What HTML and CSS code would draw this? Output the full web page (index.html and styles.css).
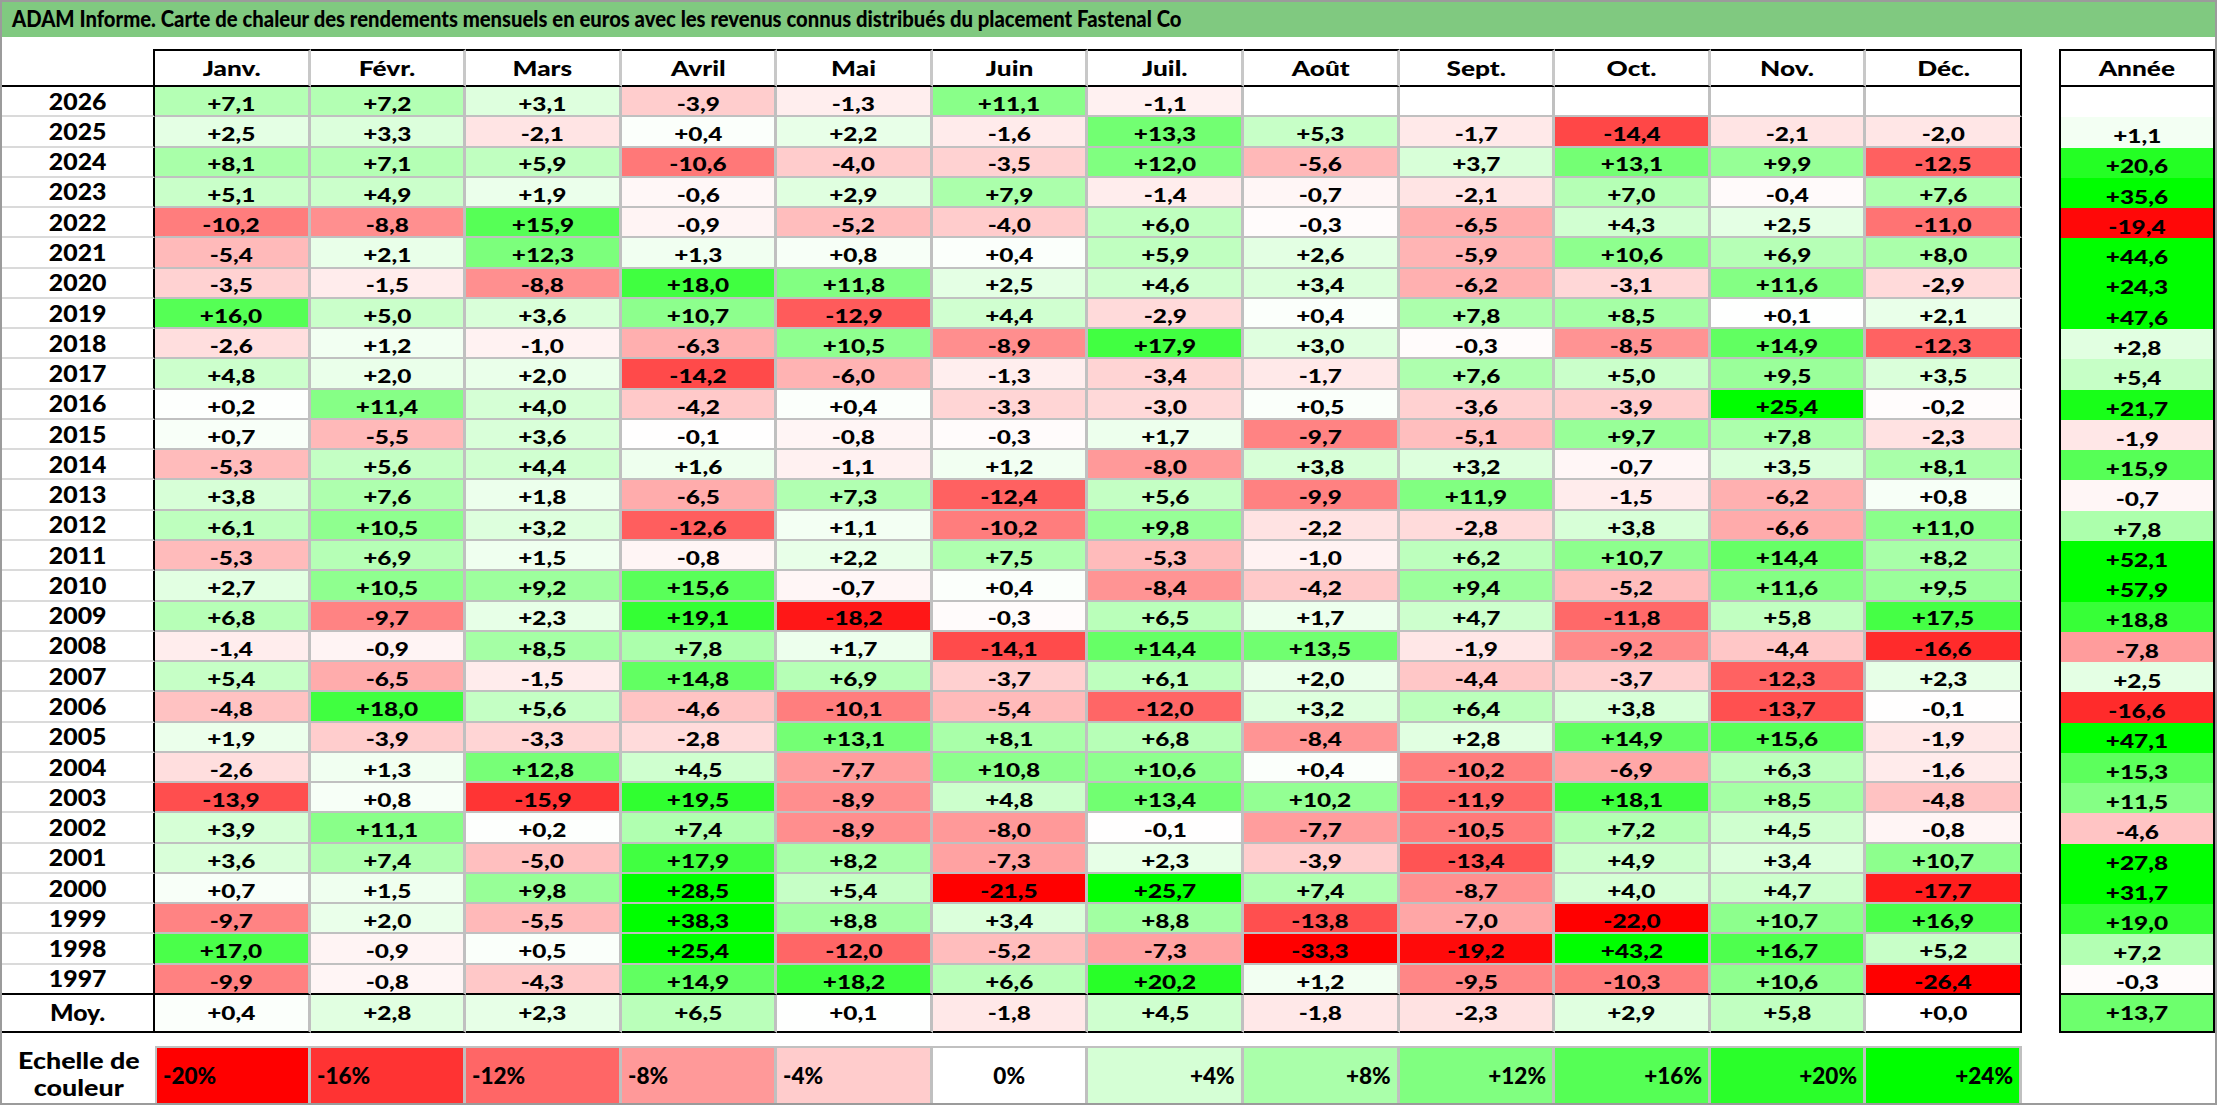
FILE: index.html
```html
<!DOCTYPE html>
<html lang="fr">
<head>
<meta charset="utf-8">
<title>ADAM Informe - Fastenal Co</title>
<link rel="stylesheet" href="styles.css">
</head>
<body>
<div class="page">
  <div class="title"><span class="tt">ADAM Informe. Carte de chaleur des rendements mensuels en euros avec les revenus connus distribués du placement Fastenal Co</span></div>
  <div class="grid" id="grid"></div>
  <div class="scale" id="scale">
    <div class="sl"><span class="tx">Echelle de<br>couleur</span></div>
  </div>
</div>
<script src="script.js"></script>
</body>
</html>
```

FILE: styles.css
```css
* { box-sizing: border-box; }
html, body { margin: 0; padding: 0; background: #fff; }
body {
  font-family: Lato, "Liberation Sans", sans-serif;
  font-weight: 900;
  color: #000;
  overflow: hidden;
}
.page {
  width: 2217px;
  height: 1105px;
  border: 2px solid #9b9b9b;
  display: flex;
  flex-direction: column;
}
.title {
  height: 35px;
  flex: none;
  background: #80c980;
  display: flex;
  align-items: center;
  padding-left: 10px;
  font-size: 22.5px;
  line-height: 1;
}
.tt {
  display: inline-block;
  white-space: nowrap;
  transform: scaleX(0.9);
  transform-origin: left center;
}

.grid {
  margin-top: 12px;
  flex: none;
  display: grid;
  grid-template-columns: 153px repeat(12, minmax(0, 1fr)) 37px 156px;
  grid-template-rows: 38px repeat(30, 30.2667px) 38px;
}
.c {
  display: flex;
  justify-content: center;
  align-items: flex-end;
  min-width: 0;
  line-height: 1.2;
}
.tx { display: inline-block; white-space: nowrap; }

/* header */
.hy { border-right: 2px solid #000; border-bottom: 2px solid #000; }
.hm, .ha {
  align-items: center;
  line-height: 1;
  font-size: 20.5px;
  border-top: 2px solid #000;
  border-bottom: 2px solid #000;
  border-right: 3px solid #c8c8c8;
}
.hm .tx, .ha .tx { transform: scaleX(1.28); }
.hm.last { border-right: 2px solid #000; }
.ha { border-left: 2px solid #000; border-right: 2px solid #000; }

/* year column */
.y {
  font-size: 23px;
  border-right: 2px solid #000;
  border-bottom: 2px solid #dadada;
}
.y .tx { transform: scaleX(1.08); }

/* data */
.d {
  font-size: 19.5px;
  border-right: 3px solid #c0c0c0;
  border-bottom: 2px solid #c0c0c0;
}
.d.last { border-right: 2px solid #000; }
.d .tx, .a .tx { transform: scaleX(1.25); }

.a {
  font-size: 19.5px;
  border-left: 2px solid #000;
  border-right: 2px solid #000;
}

.end { border-bottom: 2px solid #000; }
.moy { align-items: center; border-bottom: 2px solid #000; }

/* colour scale */
.scale {
  margin-top: 13px;
  flex: none;
  height: 57px;
  display: grid;
  grid-template-columns: 153px repeat(12, minmax(0, 1fr)) 37px 156px;
}
.sl {
  display: flex;
  align-items: center;
  justify-content: center;
  text-align: center;
  font-size: 22px;
  line-height: 27px;
}
.sl .tx { transform: scaleX(1.22); }
.sc {
  display: flex;
  align-items: center;
  padding: 0 6px;
  font-size: 23px;
  border-top: 2px solid #c0c0c0;
  border-right: 3px solid #c0c0c0;
  min-width: 0;
}
.sc.first { border-left: 2px solid #c0c0c0; }
.sc.neg { justify-content: flex-start; }
.sc.zero { justify-content: center; }
.sc.pos { justify-content: flex-end; }
.sc .tx { transform: scaleX(0.98); }
.sc.neg .tx { transform-origin: left center; }
.sc.pos .tx { transform-origin: right center; }
```

FILE: script.js
```js
(function () {
  var months = ['Janv.', 'Févr.', 'Mars', 'Avril', 'Mai', 'Juin', 'Juil.', 'Août', 'Sept.', 'Oct.', 'Nov.', 'Déc.'];
  var N = null;
  var rows = [
    [2026, [7.1, 7.2, 3.1, -3.9, -1.3, 11.1, -1.1, N, N, N, N, N], N],
    [2025, [2.5, 3.3, -2.1, 0.4, 2.2, -1.6, 13.3, 5.3, -1.7, -14.4, -2.1, -2.0], 1.1],
    [2024, [8.1, 7.1, 5.9, -10.6, -4.0, -3.5, 12.0, -5.6, 3.7, 13.1, 9.9, -12.5], 20.6],
    [2023, [5.1, 4.9, 1.9, -0.6, 2.9, 7.9, -1.4, -0.7, -2.1, 7.0, -0.4, 7.6], 35.6],
    [2022, [-10.2, -8.8, 15.9, -0.9, -5.2, -4.0, 6.0, -0.3, -6.5, 4.3, 2.5, -11.0], -19.4],
    [2021, [-5.4, 2.1, 12.3, 1.3, 0.8, 0.4, 5.9, 2.6, -5.9, 10.6, 6.9, 8.0], 44.6],
    [2020, [-3.5, -1.5, -8.8, 18.0, 11.8, 2.5, 4.6, 3.4, -6.2, -3.1, 11.6, -2.9], 24.3],
    [2019, [16.0, 5.0, 3.6, 10.7, -12.9, 4.4, -2.9, 0.4, 7.8, 8.5, 0.1, 2.1], 47.6],
    [2018, [-2.6, 1.2, -1.0, -6.3, 10.5, -8.9, 17.9, 3.0, -0.3, -8.5, 14.9, -12.3], 2.8],
    [2017, [4.8, 2.0, 2.0, -14.2, -6.0, -1.3, -3.4, -1.7, 7.6, 5.0, 9.5, 3.5], 5.4],
    [2016, [0.2, 11.4, 4.0, -4.2, 0.4, -3.3, -3.0, 0.5, -3.6, -3.9, 25.4, -0.2], 21.7],
    [2015, [0.7, -5.5, 3.6, -0.1, -0.8, -0.3, 1.7, -9.7, -5.1, 9.7, 7.8, -2.3], -1.9],
    [2014, [-5.3, 5.6, 4.4, 1.6, -1.1, 1.2, -8.0, 3.8, 3.2, -0.7, 3.5, 8.1], 15.9],
    [2013, [3.8, 7.6, 1.8, -6.5, 7.3, -12.4, 5.6, -9.9, 11.9, -1.5, -6.2, 0.8], -0.7],
    [2012, [6.1, 10.5, 3.2, -12.6, 1.1, -10.2, 9.8, -2.2, -2.8, 3.8, -6.6, 11.0], 7.8],
    [2011, [-5.3, 6.9, 1.5, -0.8, 2.2, 7.5, -5.3, -1.0, 6.2, 10.7, 14.4, 8.2], 52.1],
    [2010, [2.7, 10.5, 9.2, 15.6, -0.7, 0.4, -8.4, -4.2, 9.4, -5.2, 11.6, 9.5], 57.9],
    [2009, [6.8, -9.7, 2.3, 19.1, -18.2, -0.3, 6.5, 1.7, 4.7, -11.8, 5.8, 17.5], 18.8],
    [2008, [-1.4, -0.9, 8.5, 7.8, 1.7, -14.1, 14.4, 13.5, -1.9, -9.2, -4.4, -16.6], -7.8],
    [2007, [5.4, -6.5, -1.5, 14.8, 6.9, -3.7, 6.1, 2.0, -4.4, -3.7, -12.3, 2.3], 2.5],
    [2006, [-4.8, 18.0, 5.6, -4.6, -10.1, -5.4, -12.0, 3.2, 6.4, 3.8, -13.7, -0.1], -16.6],
    [2005, [1.9, -3.9, -3.3, -2.8, 13.1, 8.1, 6.8, -8.4, 2.8, 14.9, 15.6, -1.9], 47.1],
    [2004, [-2.6, 1.3, 12.8, 4.5, -7.7, 10.8, 10.6, 0.4, -10.2, -6.9, 6.3, -1.6], 15.3],
    [2003, [-13.9, 0.8, -15.9, 19.5, -8.9, 4.8, 13.4, 10.2, -11.9, 18.1, 8.5, -4.8], 11.5],
    [2002, [3.9, 11.1, 0.2, 7.4, -8.9, -8.0, -0.1, -7.7, -10.5, 7.2, 4.5, -0.8], -4.6],
    [2001, [3.6, 7.4, -5.0, 17.9, 8.2, -7.3, 2.3, -3.9, -13.4, 4.9, 3.4, 10.7], 27.8],
    [2000, [0.7, 1.5, 9.8, 28.5, 5.4, -21.5, 25.7, 7.4, -8.7, 4.0, 4.7, -17.7], 31.7],
    [1999, [-9.7, 2.0, -5.5, 38.3, 8.8, 3.4, 8.8, -13.8, -7.0, -22.0, 10.7, 16.9], 19.0],
    [1998, [17.0, -0.9, 0.5, 25.4, -12.0, -5.2, -7.3, -33.3, -19.2, 43.2, 16.7, 5.2], 7.2],
    [1997, [-9.9, -0.8, -4.3, 14.9, 18.2, 6.6, 20.2, 1.2, -9.5, -10.3, 10.6, -26.4], -0.3]
  ];
  var moy = [0.4, 2.8, 2.3, 6.5, 0.1, -1.8, 4.5, -1.8, -2.3, 2.9, 5.8, 0.0];
  var moyYear = 13.7;

  function fmt(v) {
    return (v < 0 ? '-' : '+') + Math.abs(v).toFixed(1).replace('.', ',');
  }
  function colour(v) {
    var c;
    if (v >= 0) {
      c = Math.round(255 * (1 - Math.min(v, 24) / 24));
      return 'rgb(' + c + ',255,' + c + ')';
    }
    c = Math.round(255 * (1 - Math.min(-v, 20) / 20));
    return 'rgb(255,' + c + ',' + c + ')';
  }

  var grid = document.getElementById('grid');
  function cell(parent, cls, text, bg) {
    var d = document.createElement('div');
    d.className = cls;
    if (bg) d.style.background = bg;
    if (text !== null && text !== undefined) {
      var s = document.createElement('span');
      s.className = 'tx';
      s.innerHTML = text;
      d.appendChild(s);
    }
    parent.appendChild(d);
    return d;
  }

  // header
  cell(grid, 'c hy', null);
  months.forEach(function (m, i) {
    cell(grid, 'c hm' + (i === 11 ? ' last' : ''), m);
  });
  cell(grid, 'gap', null);
  cell(grid, 'c ha', 'Année');

  // rows
  rows.forEach(function (r, ri) {
    var end = ri === rows.length - 1 ? ' end' : '';
    cell(grid, 'c y' + end, String(r[0]));
    r[1].forEach(function (v, i) {
      var cls = 'c d' + (i === 11 ? ' last' : '') + end;
      if (v === null) cell(grid, cls, null);
      else cell(grid, cls, fmt(v), colour(v));
    });
    cell(grid, 'gap', null);
    if (r[2] === null) cell(grid, 'c a' + end, null);
    else cell(grid, 'c a' + end, fmt(r[2]), colour(r[2]));
  });

  // average row
  cell(grid, 'c y moy', 'Moy.');
  moy.forEach(function (v, i) {
    cell(grid, 'c d moy' + (i === 11 ? ' last' : ''), fmt(v), colour(v));
  });
  cell(grid, 'gap', null);
  cell(grid, 'c a moy', fmt(moyYear), colour(moyYear));

  // colour scale
  var scale = document.getElementById('scale');
  var steps = [-20, -16, -12, -8, -4, 0, 4, 8, 12, 16, 20, 24];
  steps.forEach(function (v, i) {
    var kind = v < 0 ? 'neg' : (v === 0 ? 'zero' : 'pos');
    var label = (v > 0 ? '+' : '') + v + '%';
    cell(scale, 'sc ' + kind + (i === 0 ? ' first' : ''), label, colour(v));
  });
})();
```
